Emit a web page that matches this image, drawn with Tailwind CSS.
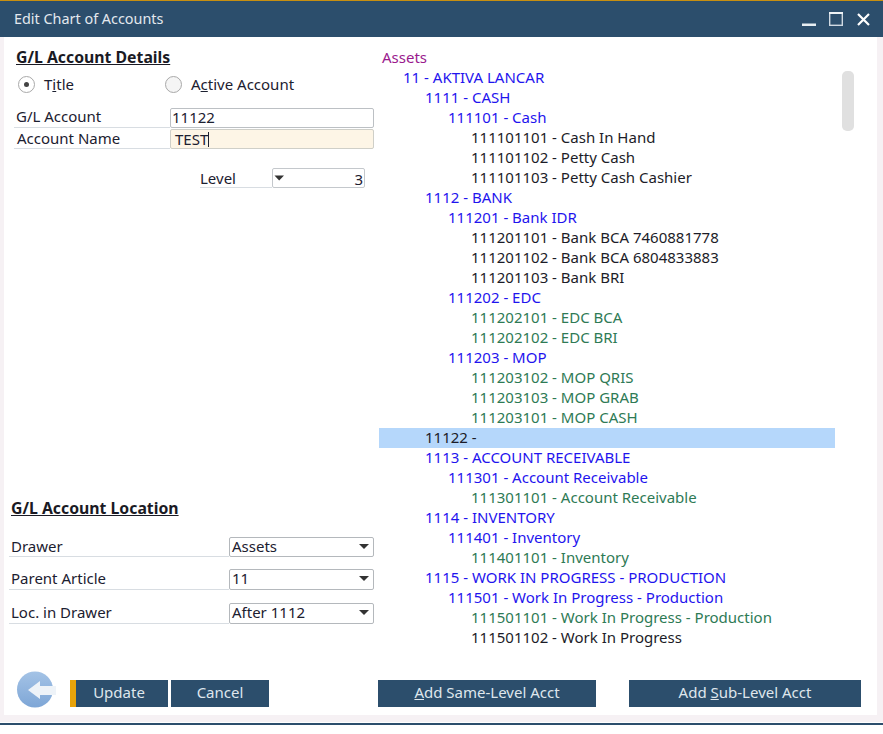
<!DOCTYPE html>
<html><head><meta charset="utf-8"><script src="https://cdn.jsdelivr.net/npm/@tailwindcss/browser@4"></script></head>
<body class="bg-white">
<div class="w-[883px] h-[734px] flex flex-col overflow-hidden bg-white text-[15px] text-[#1c2030] font-['Noto_Sans','DejaVu_Sans',sans-serif]">
  <div class="h-[37px] shrink-0 border-t border-[#c88f10] bg-[#2c4e6c] flex items-center justify-between pl-[14px] pr-[13px]">
    <span class="text-[#e3e8ee] text-[14.4px]">Edit Chart of Accounts</span>
    <div class="flex items-center">
      <svg width="14" height="14" viewBox="0 0 14 14" class="mr-[13px]"><rect x="0" y="11.5" width="14" height="2.5" fill="#e8eef2"/></svg>
      <svg width="14" height="14" viewBox="0 0 14 14" class="mr-[14px]"><rect x="0.7" y="0.7" width="12.6" height="12.6" fill="none" stroke="#d0d9e2" stroke-width="1.4"/><rect x="0" y="0" width="14" height="2" fill="#eef2f5"/></svg>
      <svg width="13" height="13" viewBox="0 0 13 13"><path d="M1 1L12 12M12 1L1 12" stroke="#fff" stroke-width="2.2"/></svg>
    </div>
  </div>
  <div class="h-[685px] shrink-0 bg-[#f6f1f4] pl-[4px] pr-[6px] pb-[7px]">
    <div class="h-full bg-white flex flex-col">
      <div class="flex flex-1 min-h-0">
        <div class="w-[375px] shrink-0 flex flex-col pt-[10px]">
          <div class="pl-[12px] font-bold underline text-[15.8px] leading-[20px] text-[#1a1a24]">G/L Account Details</div>
          <div class="flex items-center pl-[14px] mt-[7px] h-[20px]">
            <div class="w-[147px] flex items-center gap-[9px]">
              <span class="w-[17px] h-[17px] rounded-full border border-[#a9a9a9] bg-white flex items-center justify-center"><span class="w-[5px] h-[5px] rounded-full bg-[#444]"></span></span>
              <span>T<span class="underline">i</span>tle</span>
            </div>
            <div class="flex items-center gap-[9px]">
              <span class="w-[17px] h-[17px] rounded-full border border-[#a9a9a9] bg-[#f5f5f5]"></span>
              <span>A<span class="underline">c</span>tive Account</span>
            </div>
          </div>
          <div class="flex items-end pl-[10px] pr-[5px] mt-[14px] h-[20px]">
            <span class="w-[156px] border-b border-[#d8dde2] pl-[2px] h-[20px] leading-[17px]">G/L Account</span>
            <span class="flex-1 h-[20px] border border-[#bcc0c4] rounded-[2px] bg-white pl-[1px] leading-[17px]">11122</span>
          </div>
          <div class="flex items-end pl-[10px] pr-[5px] mt-[1px] h-[20px]">
            <span class="w-[156px] border-b border-[#d8dde2] pl-[3px] h-[20px] leading-[19px]">Account Name</span>
            <span class="flex-1 h-[20px] border border-[#cfcfc8] rounded-[2px] bg-[#fdf5e6] pl-[4px] leading-[19px]">TEST<span class="inline-block w-px h-[15px] bg-[#1c2030] align-[-2px]"></span></span>
          </div>
          <div class="flex items-end justify-end pr-[14px] mt-[19px] h-[20px]">
            <span class="w-[72px] border-b border-[#d8dde2] h-[20px] leading-[20px]">Level</span>
            <span class="w-[93px] h-[20px] border border-[#c4c8cc] rounded-[2px] bg-white flex items-center justify-between pl-[1px] pr-[1px]">
              <svg width="11" height="6" viewBox="0 0 11 6"><path d="M0.5 0.5H10L5.2 5.5Z" fill="#333"/></svg><span class="pt-[2px] leading-[18px]">3</span>
            </span>
          </div>
          <div class="flex-1"></div>
          <div class="pl-[7px] font-bold underline text-[15.8px] leading-[20px] text-[#1a1a24]">G/L Account Location</div>
          <div class="flex items-end pl-[5px] pr-[5px] mt-[19px] h-[20px]">
            <span class="w-[220px] border-b border-[#d8dde2] pl-[2px] h-[20px] leading-[18px]">Drawer</span>
            <span class="flex-1 h-[20px] border border-[#b4b8bc] rounded-[2px] bg-white pl-[2px] pr-[4px] pb-[2px] flex items-center justify-between"><span>Assets</span><svg width="10" height="5" viewBox="0 0 10 5"><path d="M0 0H10L5 5Z" fill="#333"/></svg></span>
          </div>
          <div class="flex items-end pl-[5px] pr-[5px] mt-[12px] h-[21px]">
            <span class="w-[220px] border-b border-[#d8dde2] pl-[2px] h-[21px] leading-[18px]">Parent Article</span>
            <span class="flex-1 h-[21px] border border-[#b4b8bc] rounded-[2px] bg-white pl-[2px] pr-[4px] pb-[2px] flex items-center justify-between"><span>11</span><svg width="10" height="5" viewBox="0 0 10 5"><path d="M0 0H10L5 5Z" fill="#333"/></svg></span>
          </div>
          <div class="flex items-end pl-[5px] pr-[5px] mt-[13px] h-[21px] mb-[56px]">
            <span class="w-[220px] border-b border-[#d8dde2] pl-[2px] h-[21px] leading-[18px]">Loc. in Drawer</span>
            <span class="flex-1 h-[21px] border border-[#b4b8bc] rounded-[2px] bg-white pl-[2px] pr-[4px] pb-[2px] flex items-center justify-between"><span>After 1112</span><svg width="10" height="5" viewBox="0 0 10 5"><path d="M0 0H10L5 5Z" fill="#333"/></svg></span>
          </div>
        </div>
        <div class="relative flex-1 pt-[11px] text-[#1c1c28] [&>div]:h-[20px] [&>div]:leading-[18px]">
          <div class="text-[#9a1a8e] pl-[3px]">Assets</div>
          <div class="text-[#1f14ee] pl-[24px]">11 - AKTIVA LANCAR</div>
          <div class="text-[#1f14ee] pl-[46px]">1111 - CASH</div>
          <div class="text-[#1f14ee] pl-[69px]">111101 - Cash</div>
          <div class="pl-[92px]">111101101 - Cash In Hand</div>
          <div class="pl-[92px]">111101102 - Petty Cash</div>
          <div class="pl-[92px]">111101103 - Petty Cash Cashier</div>
          <div class="text-[#1f14ee] pl-[46px]">1112 - BANK</div>
          <div class="text-[#1f14ee] pl-[69px]">111201 - Bank IDR</div>
          <div class="pl-[92px]">111201101 - Bank BCA 7460881778</div>
          <div class="pl-[92px]">111201102 - Bank BCA 6804833883</div>
          <div class="pl-[92px]">111201103 - Bank BRI</div>
          <div class="text-[#1f14ee] pl-[69px]">111202 - EDC</div>
          <div class="text-[#2e7a55] pl-[92px]">111202101 - EDC BCA</div>
          <div class="text-[#2e7a55] pl-[92px]">111202102 - EDC BRI</div>
          <div class="text-[#1f14ee] pl-[69px]">111203 - MOP</div>
          <div class="text-[#2e7a55] pl-[92px]">111203102 - MOP QRIS</div>
          <div class="text-[#2e7a55] pl-[92px]">111203103 - MOP GRAB</div>
          <div class="text-[#2e7a55] pl-[92px]">111203101 - MOP CASH</div>
          <div class="bg-[#b5d7fb] pl-[46px] w-[456px]">11122 -</div>
          <div class="text-[#1f14ee] pl-[46px]">1113 - ACCOUNT RECEIVABLE</div>
          <div class="text-[#1f14ee] pl-[69px]">111301 - Account Receivable</div>
          <div class="text-[#2e7a55] pl-[92px]">111301101 - Account Receivable</div>
          <div class="text-[#1f14ee] pl-[46px]">1114 - INVENTORY</div>
          <div class="text-[#1f14ee] pl-[69px]">111401 - Inventory</div>
          <div class="text-[#2e7a55] pl-[92px]">111401101 - Inventory</div>
          <div class="text-[#1f14ee] pl-[46px]">1115 - WORK IN PROGRESS - PRODUCTION</div>
          <div class="text-[#1f14ee] pl-[69px]">111501 - Work In Progress - Production</div>
          <div class="text-[#2e7a55] pl-[92px]">111501101 - Work In Progress - Production</div>
          <div class="pl-[92px]">111501102 - Work In Progress</div>
          <div class="absolute left-[463px] top-[34px] w-[12px] !h-[60px] rounded-[5px] bg-[#e0e0e0]"></div>
        </div>
      </div>
      <div class="h-[27px] shrink-0 flex items-center mb-[8px] pl-[12px] text-[15px] text-[#dfe6ec]">
        <svg width="40" height="37" viewBox="0 0 40 37" class="shrink-0 mr-[14px] -mt-[8px]">
          <defs><linearGradient id="g" x1="0" y1="0" x2="0" y2="1"><stop offset="0" stop-color="#a4c3e6"/><stop offset="1" stop-color="#7ea6d6"/></linearGradient></defs>
          <circle cx="19" cy="18.5" r="18" fill="url(#g)"/>
          <path d="M12 19L24 10V15H40V24H24V28Z" fill="#eef3f8"/>
        </svg>
        <div class="w-[98px] h-[27px] bg-[#2c4e6c] border-l-[6px] border-[#e8a30a] pr-[6px] pb-[2px] flex items-center justify-center">Update</div>
        <div class="w-[98px] h-[27px] bg-[#2c4e6c] ml-[3px] pb-[2px] flex items-center justify-center">Cancel</div>
        <div class="w-[218px] h-[27px] bg-[#2c4e6c] ml-[109px] pb-[2px] flex items-center justify-center"><span><span class="underline">A</span>dd Same-Level Acct</span></div>
        <div class="w-[232px] h-[27px] bg-[#2c4e6c] ml-[33px] pb-[2px] flex items-center justify-center"><span>Add <span class="underline">S</span>ub-Level Acct</span></div>
      </div>
    </div>
  </div>
  <div class="h-[2px] mt-[1px] shrink-0 bg-[#2c4e6c]"></div>
</div>
</body></html>
